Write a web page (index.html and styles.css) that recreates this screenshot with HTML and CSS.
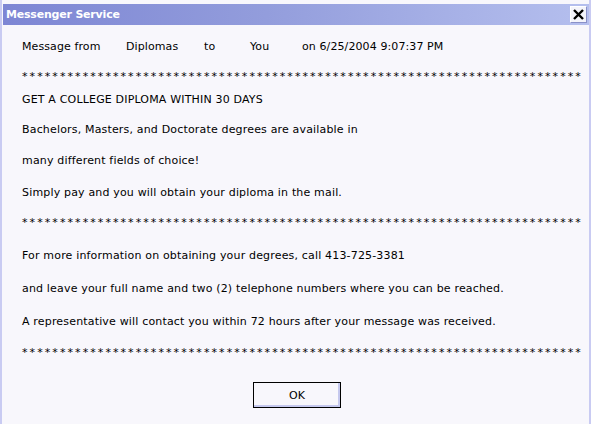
FILE: index.html
```html
<!DOCTYPE html>
<html>
<head>
<meta charset="utf-8">
<link rel="stylesheet" href="styles.css">
</head>
<body>
<div class="window">
  <div class="titlebar">
    <span class="title">Messenger Service</span>
    <span class="close"><svg width="11" height="11" viewBox="0 0 11 11"><path d="M1 1 L10 10 M10 1 L1 10" stroke="#000" stroke-width="2.4"/></svg></span>
  </div>
  <div class="content">
    <div class="line header">
      <span class="h-from">Message from</span>
      <span class="h-name">Diplomas</span>
      <span class="h-to">to</span>
      <span class="h-you">You</span>
      <span>on 6/25/2004 9:07:37 PM</span>
    </div>
    <div class="line rule g30">**************************************************************************</div>
    <div class="line g23">GET A COLLEGE DIPLOMA WITHIN 30 DAYS</div>
    <div class="line g30">Bachelors, Masters, and Doctorate degrees are available in</div>
    <div class="line g31">many different fields of choice!</div>
    <div class="line g32">Simply pay and you will obtain your diploma in the mail.</div>
    <div class="line rule g30">**************************************************************************</div>
    <div class="line g33">For more information on obtaining your degrees, call 413-725-3381</div>
    <div class="line g33">and leave your full name and two (2) telephone numbers where you can be reached.</div>
    <div class="line g33">A representative will contact you within 72 hours after your message was received.</div>
    <div class="line rule g31">**************************************************************************</div>
  </div>
  <div class="actions">
    <button class="ok">OK</button>
  </div>
</div>
</body>
</html>
```
FILE: styles.css
```css
html, body {
  margin: 0;
  padding: 0;
  background: #f8f7fc;
}
.window {
  width: 591px;
  height: 424px;
  box-sizing: border-box;
  border-left: 2px solid #c9cbf2;
  border-right: 2px solid #c9cbf2;
  background: #f8f7fc;
  font-family: "DejaVu Sans", Verdana, sans-serif;
  font-size: 11px;
  color: #000;
  padding-top: 4px;
  display: flex;
  flex-direction: column;
  overflow: hidden;
}
.titlebar {
  height: 21px;
  margin-left: 1px;
  background: linear-gradient(to right, #7d86d4 0%, #939ddc 45%, #b5bfee 100%);
  display: flex;
  align-items: center;
  justify-content: space-between;
  padding: 0 2px 0 3px;
}
.title {
  color: #fff;
  font-weight: bold;
  font-size: 11px;
  font-family: "DejaVu Sans", Verdana, sans-serif;
  letter-spacing: -0.2px;
}
.close {
  background: #f4f4fb;
  border: 1px solid #fff;
  border-right-color: #8a90c8;
  border-bottom-color: #8a90c8;
  display: flex;
  align-items: center;
  justify-content: center;
  box-sizing: border-box;
  width: 17px;
  height: 17px;
}
.content {
  padding-left: 20px;
  padding-top: 15px;
  letter-spacing: 0.17px;
}
.line {
  height: 13px;
  line-height: 13px;
  white-space: nowrap;
}
.header {
  display: flex;
  letter-spacing: 0.1px;
}
.h-from { width: 104px; }
.h-name { width: 78px; }
.h-to { width: 46px; }
.h-you { width: 52px; }
.rule {
  letter-spacing: 2.08px;
}
.g23 { margin-top: 10px; }
.g30 { margin-top: 17px; }
.g31 { margin-top: 18px; }
.g32 { margin-top: 19px; }
.g33 { margin-top: 20px; }
.actions {
  display: flex;
  justify-content: center;
  padding-top: 23px;
  padding-left: 3px;
}
.ok {
  width: 88px;
  height: 26px;
  box-sizing: border-box;
  border: 1px solid #000;
  background: #f8f7fc;
  box-shadow: inset -2px -2px 0 #c5c8ee;
  font-family: "DejaVu Sans", Verdana, sans-serif;
  font-size: 11px;
  color: #000;
  padding: 0;
}
```
